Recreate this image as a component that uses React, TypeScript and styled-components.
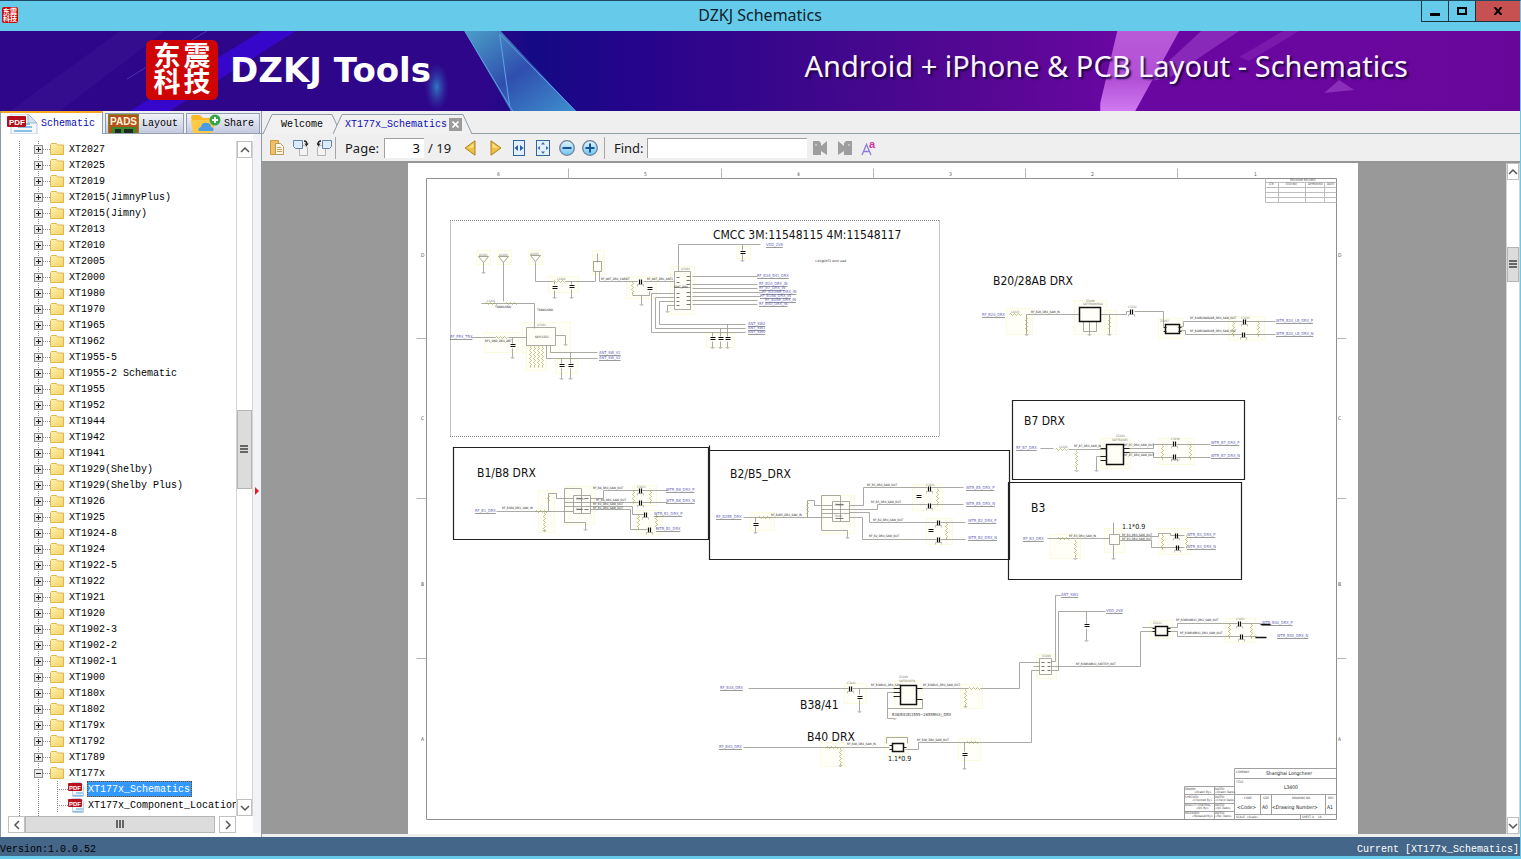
import React from "react";
import styled, { createGlobalStyle, css } from "styled-components";

const mono = `"Liberation Mono", "Noto Sans CJK SC", monospace`;
const ui = `"Noto Sans", "Open Sans", "Noto Sans CJK SC", sans-serif`;

const GlobalStyle = createGlobalStyle`
  *, *::before, *::after { box-sizing: border-box; }
  body { margin: 0; overflow: hidden; }
  button { font: inherit; color: inherit; padding: 0; margin: 0; border: 0; background: none; }
  svg { display: block; flex: none; }
`;

const Window = styled.div`
  display: flex;
  flex-direction: column;
  height: 100vh;
  background: #efeff0;
  border-top: 1px solid #1c4a63;
  border-right: 1px solid #66cbea;
  border-bottom: 3px solid #66cbea;
  font-family: ${mono};
  font-size: 10px;
  color: #000;
`;

/* ---------- title bar ---------- */

const TitleBar = styled.header`
  display: grid;
  grid-template-columns: 1fr auto 1fr;
  height: 30px;
  flex: none;
  background: #66cbea;
`;

const AppTitle = styled.h1`
  margin: 0;
  font: 400 16px/28px ${ui};
  color: #10222c;
`;

const Seal = styled.span<{ $small?: boolean }>`
  display: grid;
  grid-template-columns: auto auto;
  place-content: center;
  flex: none;
  color: #fff;
  background: #cf0505;
  font-family: "Liberation Sans", "Noto Sans CJK SC", sans-serif;
  font-weight: 700;
  ${(p) =>
    p.$small
      ? css`
          width: 16px;
          height: 16px;
          margin: 6px 0 0 2px;
          border-radius: 2px;
          font-size: 7px;
          line-height: 7px;
        `
      : css`
          width: 72px;
          height: 60px;
          border-radius: 6px;
          font-size: 27px;
          line-height: 26px;
          column-gap: 3px;
        `}
`;

const WindowButtons = styled.div`
  display: flex;
  justify-self: end;
  height: 21px;
  border-bottom: 1px solid #17313d;
`;

const WindowButton = styled.button<{ $close?: boolean }>`
  display: grid;
  place-items: center;
  width: ${(p) => (p.$close ? 45 : 27)}px;
  border-left: 1px solid #17313d;
  background: ${(p) => (p.$close ? "#c75050" : "transparent")};
`;

/* ---------- banner ---------- */

const Banner = styled.div`
  position: relative;
  display: flex;
  align-items: center;
  height: 80px;
  flex: none;
  padding: 0 112px 2px 146px;
  overflow: hidden;
  background: #2f0689;
`;

const BannerArt = styled.svg`
  position: absolute;
  inset: 0;
  width: 100%;
  height: 100%;
`;

const Brand = styled.div`
  display: flex;
  align-items: center;
  gap: 12px;
  position: relative;
`;

const BrandName = styled.span`
  font: 700 34px/40px "DejaVu Sans", ${ui};
  color: #fff;
  white-space: nowrap;
`;

const Slogan = styled.p`
  position: relative;
  margin: 0 0 8px auto;
  font: 400 29px/40px ${ui};
  color: #fbf4ff;
  white-space: nowrap;
  text-shadow: 2px 2px 2px #1c0540;
`;

/* ---------- main split ---------- */

const Main = styled.div`
  display: flex;
  flex: 1;
  min-height: 0;
`;

const SidePanel = styled.aside`
  display: flex;
  flex-direction: column;
  flex: none;
  width: 261px;
  background: #fff;
  border-left: 1px solid #8a9bb0;
`;

const SideTabs = styled.nav`
  display: flex;
  align-items: flex-end;
  gap: 2px;
  height: 23px;
  flex: none;
  background: #efeff0;
  border-bottom: 1px solid #93a1b3;
`;

const SideTab = styled.button<{ $active?: boolean }>`
  display: flex;
  align-items: center;
  gap: 3px;
  height: 20px;
  overflow: hidden;
  padding: 0 5px 0 2px;
  border: 1px solid #8f9db5;
  border-bottom: 0;
  background: linear-gradient(#f2f3f8, #c3cadf);
  ${(p) =>
    p.$active &&
    css`
      height: 23px;
      margin-bottom: -1px;
      padding: 0 7px 0 5px;
      color: #0a0ab4;
      background: #fff;
      border-width: 2px 1px 0 0;
      border-top-color: #f5a623;
    `}
`;

const SideBody = styled.div`
  display: flex;
  flex: 1;
  min-height: 0;
  padding: 7px 0 4px 7px;
`;

const TreeFrame = styled.div`
  display: grid;
  grid-template: minmax(0, 1fr) 17px / minmax(0, 1fr) 17px;
  flex: 1;
  min-width: 0;
`;

const Splitter = styled.div`
  display: flex;
  align-items: center;
  width: 8px;
  margin-top: -7px;
  padding: 14px 0 0 1px;
  background: #f3f3f7;
`;

const Tree = styled.ul`
  margin: 0;
  padding: 0;
  list-style: none;
  overflow: hidden;
  background-image: linear-gradient(#888 50%, transparent 50%), linear-gradient(#888 50%, transparent 50%);
  background-size: 1px 2px, 1px 2px;
  background-position: 11px 0, 30px 0;
  background-repeat: repeat-y;
`;

const TreeRow = styled.li<{ $child?: boolean }>`
  display: flex;
  align-items: center;
  height: 16px;
  padding-left: ${(p) => (p.$child ? 49 : 26)}px;
  white-space: nowrap;
`;

const Expander = styled.button`
  display: block;
`;

const Branch = styled.span<{ $long?: boolean }>`
  width: ${(p) => (p.$long ? 11 : 7)}px;
  height: ${(p) => (p.$long ? 16 : 1)}px;
  flex: none;
  background: ${(p) =>
    p.$long
      ? "repeating-linear-gradient(#888 0 1px, transparent 1px 2px) 0 0 / 1px 100% no-repeat, repeating-linear-gradient(90deg, #888 0 1px, transparent 1px 2px) 0 8px / 100% 1px no-repeat"
      : "repeating-linear-gradient(90deg, #888 0 1px, transparent 1px 2px)"};
`;

const TreeLabel = styled.button<{ $selected?: boolean; $child?: boolean }>`
  height: 16px;
  margin-left: ${(p) => (p.$child ? 3 : 4)}px;
  padding: 1px 1px 0;
  line-height: 15px;
  ${(p) =>
    p.$selected &&
    css`
      padding-right: 2px;
      color: #fff;
      background: #3399ff;
      outline: 1px dotted #7a4a10;
      outline-offset: -1px;
    `}
`;

/* ---------- scroll bars ---------- */

const Track = styled.div<{ $row?: boolean }>`
  display: flex;
  flex-direction: ${(p) => (p.$row ? "row" : "column")};
  min-width: 0;
  min-height: 0;
  background: #fff;
  border: solid #d4d4d4;
  border-width: ${(p) => (p.$row ? "0" : "0 1px")};
`;

const ScrollButton = styled.button<{ $w?: number }>`
  display: grid;
  place-items: center;
  flex: none;
  width: ${(p) => (p.$w ? p.$w + "px" : "auto")};
  height: 17px;
  border: 1px solid #c0c0c0;
  background: #fff;
`;

const Thumb = styled.div<{ $grow: number; $row?: boolean }>`
  display: grid;
  place-items: center;
  flex: ${(p) => p.$grow} 1 0;
  background: #dcdcdc;
  border: 1px solid #b5b5b5;
`;

const Gap = styled.div<{ $grow: number }>`
  flex: ${(p) => p.$grow} 1 0;
`;

/* ---------- document side ---------- */

const DocPanel = styled.main`
  display: flex;
  flex-direction: column;
  flex: 1;
  min-width: 0;
  border-left: 1px solid #8f9ba6;
`;

const DocTabs = styled.nav`
  display: flex;
  align-items: flex-end;
  height: 23px;
  flex: none;
  padding-left: 1px;
  box-shadow: inset 0 -1px #93a1a8;
`;

const DocTabBox = styled.div<{ $active?: boolean }>`
  display: flex;
  height: 20px;
  margin-left: ${(p) => (p.$active ? -8 : 0)}px;
  color: ${(p) => (p.$active ? "#0a0ab4" : "#000")};
`;

const DocTabFace = styled.div<{ $active?: boolean }>`
  display: flex;
  align-items: center;
  gap: 2px;
  padding: ${(p) => (p.$active ? "0 0 0 2px" : "0 8px")};
  border-top: 1px solid #8d9aa8;
  background: #f1f1f2;
`;

const CloseTab = styled.button`
  display: grid;
  place-items: center;
  width: 13px;
  height: 13px;
  background: #9b9b9b;
`;

const Toolbar = styled.div`
  display: flex;
  align-items: center;
  height: 29px;
  flex: none;
  padding-left: 5px;
  border-bottom: 2px solid #969696;
  font: 400 13px/20px ${ui};
  color: #1a1a1a;
`;

const ToolButton = styled.button<{ $w?: number }>`
  display: grid;
  place-items: center;
  width: ${(p) => p.$w ?? 24}px;
  height: 24px;
`;

const Divider = styled.span`
  width: 1px;
  height: 22px;
  background: #a5a5a5;
`;

const Field = styled.label<{ $gap: number }>`
  display: flex;
  align-items: center;
  gap: ${(p) => p.$gap}px;
  padding-left: 9px;
`;

const Box = styled.input<{ $w: number }>`
  width: ${(p) => p.$w}px;
  height: 20px;
  padding: 0 4px;
  border: 0;
  border-top: 1px solid #a0a0a0;
  border-left: 1px solid #a0a0a0;
  background: #fff;
  font: inherit;
  outline: 0;
  text-align: right;
`;

const Total = styled.span`
  width: 34px;
  padding-left: 4px;
  white-space: nowrap;
`;

const Viewer = styled.div`
  display: flex;
  flex: 1;
  min-height: 0;
  margin-bottom: 3px;
  background: #999;
`;

const Stage = styled.div`
  display: flex;
  justify-content: center;
  flex: 1;
  min-width: 0;
  padding-right: 2px;
  overflow: hidden;
`;

const Sheet = styled.svg`
  width: 950px;
  background: #fff;
  font-family: "DejaVu Sans Condensed", "DejaVu Sans", sans-serif;
`;

const StatusBar = styled.footer`
  display: flex;
  justify-content: space-between;
  align-items: flex-end;
  height: 19px;
  flex: none;
  padding: 0 1px 0 0;
  background: #446688;
  line-height: 13px;
`;

const Current = styled.span`
  color: #fff;
`;

/* ---------- icons ---------- */

const Chevron = ({ dir }: { dir: "up" | "down" | "left" | "right" }) => {
  const d = { up: "M1 7l4-4 4 4", down: "M1 3l4 4 4-4", left: "M7 1L3 5l4 4", right: "M3 1l4 4-4 4" }[dir];
  return (
    <svg width="10" height="10" viewBox="0 0 10 10">
      <path d={d} fill="none" stroke="#555" strokeWidth="1.5" />
    </svg>
  );
};

const Grip = ({ row }: { row?: boolean }) => (
  <svg width="9" height="9" viewBox="0 0 9 9">
    <path d={row ? "M1 0v8M4 0v8M7 0v8" : "M0 1h8M0 4h8M0 7h8"} stroke="#666" strokeWidth="2" />
  </svg>
);

const FolderIcon = () => (
  <svg width="14" height="14" viewBox="0 0 14 14">
    <defs>
      <linearGradient id="folder" x1="0" y1="0" x2="1" y2="1">
        <stop offset="0" stopColor="#fff3b4" />
        <stop offset="1" stopColor="#f5d163" />
      </linearGradient>
    </defs>
    <path d="M.5 12.500V2.500l1-1h5l1 1.500h6v9.500z" fill="url(#folder)" stroke="#dfb54c" />
  </svg>
);

const BoxIcon = ({ open }: { open?: boolean }) => (
  <svg width="9" height="9" viewBox="0 0 9 9">
    <rect x=".5" y=".5" width="8" height="8" fill="#e9e9e9" stroke="#8e8e8e" />
    <path d={open ? "M2 4.500h5" : "M2 4.500h5M4.500 2v5"} stroke="#222" />
  </svg>
);

const PdfIcon = ({ large }: { large?: boolean }) => (
  <svg width={large ? 32 : 16} height={large ? 20 : 15} viewBox={large ? "0 0 32 20" : "0 0 16 15"}>
    {large ? (
      <>
        <path d="M5 0h17l9 9v11H5z" fill="#f4f8fc" stroke="#b9cfe2" />
        <path d="M22 0v9h9z" fill="#d5e4f2" stroke="#9fb9cf" />
        <path d="M12 13h14M16 10h8M8 17h18" stroke="#8ac0e6" strokeWidth="2" />
        <rect x="1" y="2" width="19" height="11" rx="1" fill="#b40f1b" />
        <text x="3" y="11" fontSize="8" fontWeight="700" fontFamily="Liberation Sans, sans-serif" fill="#fff">PDF</text>
      </>
    ) : (
      <>
        <path d="M4.500 0.500h8l3 3v11h-11z" fill="#f6fafe" stroke="#c3d5e4" />
        <path d="M8 11h7M5 13.500h10" stroke="#8ac0e6" strokeWidth="1.500" />
        <rect x="0" y="1" width="14" height="8" rx="1" fill="#bb101d" />
        <text x="1" y="7.500" fontSize="6" fontWeight="700" fontFamily="Liberation Sans, sans-serif" fill="#fff">PDF</text>
      </>
    )}
  </svg>
);

const PadsIcon = () => (
  <svg width="31" height="19" viewBox="0 0 31 19">
    <rect width="31" height="19" fill="#b4521b" />
    <rect x=".5" y=".5" width="30" height="20" fill="none" stroke="#7d8a2c" />
    <text x="2" y="11" fontSize="10" fontWeight="700" fontFamily="Liberation Sans, sans-serif" fill="#fff6dc">PADS</text>
    <rect x="4" y="13" width="24" height="6" fill="#3c8a2e" />
    <path d="M7 15h6v4H7zM16 15h9v4h-9z" fill="#1f2b1c" />
  </svg>
);

const ShareIcon = () => (
  <svg width="32" height="19" viewBox="-1 0 32 19">
    <path d="M1 3q0-2 2-2h7l3 3h8q3 0 4 3l-3 12H5z" fill="#fbb827" />
    <path d="M3 19L1 6h22l-1 13z" fill="#ffca45" />
    <path d="M9 17q-2-3 2-4 1-5 6-4 4 0 4 4 4 1 2 4z" fill="#4a9be8" />
    <circle cx="25" cy="6" r="5.500" fill="#35a845" />
    <path d="M25 3v6M22 6h6" stroke="#fff" strokeWidth="2" />
  </svg>
);

const DocIcon = () => (
  <svg width="16" height="16" viewBox="0 0 16 16">
    <path d="M1.500 .5h8v14h-8z" fill="#f0c069" stroke="#cf9a3e" />
    <path d="M6.500 3.500h5l3 3v8h-8z" fill="#fdf6e3" stroke="#b79a63" />
    <path d="M8 7.500h4M8 9.500h5M8 11.500h5" stroke="#c9a35f" />
  </svg>
);

const RotateIcon = ({ flip }: { flip?: boolean }) => (
  <svg width="17" height="17" viewBox="0 0 17 17">
    <g transform={flip ? "matrix(-1 0 0 1 17 0)" : undefined}>
      <path d="M7.500 6.500h5l3 2v8h-8z" fill="#f3f3f3" stroke="#b5b5b5" />
      <path d="M1.500 1.500h9v8h-7l-2-2z" fill="#dcebfa" stroke="#5f83ab" />
      <path d="M12 2q3 0 3 3.500" fill="none" stroke="#222" strokeWidth="1.300" />
      <path d="M12.500 4.500h4L14.500 7.500z" fill="#222" />
    </g>
  </svg>
);

const PageArrow = ({ next }: { next?: boolean }) => (
  <svg width="12" height="16" viewBox="0 0 12 16">
    <path d={next ? "M1 .8v14.400L11 8z" : "M11 .8v14.400L1 8z"} fill="#f0c040" stroke="#ab8223" strokeLinejoin="round" />
    <path d={next ? "M2.500 3.500v4L8 8z" : "M9.500 3.500v4L4 8z"} fill="#ffe48c" />
  </svg>
);

const FitIcon = ({ page }: { page?: boolean }) => (
  <svg width="14" height="16" viewBox="0 0 14 16">
    <rect x={page ? 0.5 : 1.5} y=".5" width={page ? 13 : 11} height="15" fill="#e3effc" stroke="#31649f" />
    {page ? (
      <path d="M7 2L9 4.500H5zM7 14l2-2.500H5zM1.500 8L4 6v4zM12.500 8L10 6v4z" fill="#3d6fb0" />
    ) : (
      <path d="M2.500 8L6 5v6zM11.500 8L8 5v6z" fill="#2b5ea8" />
    )}
  </svg>
);

const ZoomIcon = ({ plus }: { plus?: boolean }) => (
  <svg width="16" height="16" viewBox="0 0 16 16">
    <defs>
      <linearGradient id="lens" x1="0" y1="0" x2="0" y2="1">
        <stop offset="0" stopColor="#e3f5ff" />
        <stop offset="1" stopColor="#6cc3f5" />
      </linearGradient>
    </defs>
    <circle cx="8" cy="8" r="7.300" fill="url(#lens)" stroke="#6b8299" strokeWidth="1.300" />
    <path d={plus ? "M3.500 8h9M8 3.500v9" : "M3.500 8h9"} stroke="#1b5594" strokeWidth="2" />
  </svg>
);

const FindArrow = ({ next }: { next?: boolean }) => (
  <svg width="16" height="16" viewBox="0 0 16 16">
    <g transform={next ? "matrix(-1 0 0 1 16 0)" : undefined}>
      <path d="M1 1h6l2 2v3l6-5v14l-6-4v4H1z" fill="#9e9e9e" />
      <circle cx="4" cy="5" r="1" fill="#d0d0d0" />
    </g>
  </svg>
);

const CaseIcon = () => (
  <svg width="16" height="20" viewBox="0 -1 16 20">
    <path d="M1 16L5.500 5.500 10 16M3 12.500h5" fill="none" stroke="#8f7be0" strokeWidth="1.300" />
    <text x="8" y="9" fontSize="11" fontWeight="700" fontFamily="Liberation Sans, sans-serif" fill="#c93aa0">a</text>
  </svg>
);

const Slant = ({ side }: { side: "left" | "right" }) => (
  <svg width="10" height="20" viewBox="0 0 10 20">
    <path
      d={side === "left" ? "M0 20L9 .5H10V20z" : "M10 20L1 .5H0V20z"}
      fill="#f1f1f2"
    />
    <path d={side === "left" ? "M0 20L9 .5H10" : "M10 20L1 .5H0"} fill="none" stroke="#8d9aa8" />
  </svg>
);

/* ---------- schematic drawing ---------- */

const wires = `
M503 262V301 M483 262V272 M481 303H534V328 M535 262V281H553 M565 281H595V271 M599 271V281H637 M643 281H674 M597 253V262
M632 295H649V291 M641 295V304 M554 281V284 M554 290V297 M571 281V284 M571 289V297
M674 271H690V309H674Z M674 287H690 M678 271V244H760 M742 244V250 M742 254V260
M692 276H757 M692 284H757 M692 288H757 M692 292H762 M692 296H760 M692 300H757 M692 304H757
M674 293H651V332H745 M674 297H655V328H745 M674 301H659V324H745 M674 305H667V311
M712 332V336 M720 328V336 M727 324V336 M712 341V347 M720 341V347 M727 341V347
M526 327H555V345H526Z M555 335H565V344 M471 337H495 M508 337H526 M512 337V343 M512 348V357
M546 345V358H597 M550 345V352H597 M561 358V363 M561 368V378 M570 352V363 M570 368V378
M1026 314H1079 M1083 321V331H1096V321 M1089 321V334 M1100 314H1126V311H1129 M1109 314V334 M1134 311H1163V326
M1180 326H1183V321H1242 M1246 321H1275 M1180 330H1185V334H1241 M1245 334H1275 M1026 314V334
M1040 448H1053 M1068 449H1106 M1106 456H1096V470 M1123 448H1153V444H1172 M1176 444H1210 M1123 452H1153V457H1172 M1176 457H1210
M1047 538H1109 M1109 534V544H1119V534Z M1113 522V534 M1113 544V558 M1119 536H1158V533H1170V535H1184 M1119 540H1151V547H1184
M496 511H573 M548 511V493H556V498H573 M581 495V488H564V522H585V529 M573 495H590V513H573Z M573 502H590 M573 506H590 M581 495V513
M564 502H573 M564 506H573 M590 498H603V490H638 M642 490H667 M590 502H638 M642 502H667 M590 506H632V514H643 M590 509H630V529H647
M743 517H832 M755 517V522 M755 526V532 M807 517V500H814V505H832 M840 501V495H821V530H847V537 M832 501H849V521H832Z M832 509H849 M832 513H849 M840 501V521
M821 509H832 M821 513H832 M849 505H863V487H927 M931 487H963 M849 509H877V504H927 M931 504H963 M849 512H869V522H936 M940 522H965 M849 517H862V539H936 M940 539H965
M748 688H848 M852 688H893 M859 688V694 M859 699V711 M893 692H887V718H894 M922 699V708H887 M922 688H968 M980 688H1019V662H1039
M743 747H889 M886 743V737H907V743 M905 749H918V742H1031V670H1039 M964 742V751 M964 756V768
M1039 658H1051V674H1039Z M1051 661H1055V595H1060 M1051 670H1058V611H1105 M1051 666H1140V631H1155 M1142 627H1155 M1086 611V623 M1086 628V640 M1033 666H1039
M1167 627H1177V623H1237 M1241 623H1260 M1167 631H1177V636H1239 M1243 636H1256
`;

const icBodies = "M1079 307H1100V321H1079Z M1165 324H1179V333H1165Z M1106 444H1123V464H1106Z M900 685H916V704H900Z M892 743H903V751H892Z M1155 626H1167V635H1155Z";
const icStubs = "M1163 327H1166 M1163 331H1166 M1178 327H1181 M1178 331H1181 M1100 448H1106 M1100 456H1106 M1100 460H1106 M1123 448H1129 M1123 452H1129 M893 688H900 M893 692H900 M893 696H900 M916 688H922 M916 699H922 M889 745H892 M889 749H892 M903 747H906 M1152 628H1155 M1152 631H1155 M1167 628H1170 M1167 631H1170";

/* components in series with a wire: x, y */
const seriesCaps = [
  [640, 281], [1131, 311], [1244, 321], [1243, 334], [1174, 443], [1174, 456], [1176, 535], [1177, 547],
  [640, 490], [640, 502], [645, 514], [649, 529], [929, 488], [929, 505], [938, 522], [938, 539], [850, 688], [1239, 623], [1241, 636],
];

/* components shunted to ground: x, y */
const shuntCaps = [
  [554, 287], [571, 286], [649, 288], [742, 252], [712, 338], [720, 338], [727, 338], [512, 345], [561, 365], [570, 365],
  [755, 524], [918, 496], [930, 530], [859, 697], [964, 754], [1086, 625],
];

const seriesRes = [[553, 281], [485, 303], [505, 303], [495, 337], [1009, 314], [1055, 449], [1057, 538], [535, 511], [758, 517], [968, 688], [826, 747], [966, 742]];

const shuntRes = [
  [632, 281, 12], [530, 346, 20], [534, 346, 20], [538, 346, 20], [542, 346, 20], [1026, 316, 16], [1109, 316, 14],
  [1233, 321, 14], [1258, 321, 14], [1076, 450, 18], [1162, 444, 14], [1190, 444, 14], [1075, 540, 16], [1162, 534, 14], [1186, 535, 12],
  [544, 512, 18], [633, 490, 12], [650, 490, 12], [638, 514, 14], [656, 514, 14], [807, 501, 14], [937, 488, 16], [946, 522, 16],
  [965, 689, 16], [840, 748, 16], [1229, 623, 14], [1251, 623, 14], [548, 494, 8],
];

const grounds = [
  [483, 272], [554, 297], [571, 297], [641, 304], [742, 260], [667, 311], [712, 347], [720, 347], [727, 347], [565, 344], [512, 357],
  [561, 378], [570, 378], [1026, 334], [1089, 334], [1109, 334], [1076, 470], [1096, 470], [1075, 558], [1113, 558], [544, 530], [585, 529],
  [755, 532], [847, 537], [859, 711], [894, 718], [965, 706], [840, 765], [964, 768], [1086, 640],
];

const halos = [
  [476, 250, 14, 14], [497, 250, 14, 14], [528, 250, 14, 14], [592, 250, 12, 24], [548, 276, 30, 16], [626, 276, 30, 22], [670, 266, 24, 48],
  [522, 322, 48, 30], [706, 333, 28, 14], [736, 246, 14, 12], [555, 359, 22, 14], [526, 346, 20, 24], [484, 332, 34, 20], [1074, 300, 32, 34],
  [1158, 318, 24, 20], [1228, 316, 36, 24], [1006, 308, 26, 26], [1104, 310, 12, 24], [1100, 438, 30, 30], [1158, 438, 36, 26], [1158, 528, 32, 26],
  [1050, 534, 30, 24], [1104, 528, 20, 24], [564, 486, 30, 38], [632, 485, 24, 20], [636, 510, 26, 24], [822, 495, 32, 38], [912, 484, 30, 26],
  [926, 518, 26, 26], [538, 490, 16, 42], [844, 683, 22, 20], [894, 680, 28, 28], [960, 684, 22, 24], [884, 736, 24, 20], [1036, 654, 20, 24],
  [1150, 620, 22, 18], [1225, 618, 30, 24], [820, 742, 24, 24], [958, 738, 22, 22], [750, 512, 24, 18],
];

type Note = [number, number, string];

const netNames: Note[] = [
  [601, 280, "RF_ANT_DRX_CARKIT"], [647, 280, "RF_ANT_DRX_ANT1"], [1031, 313, "RF_B20_DRX_SAW_IN"], [1190, 319, "RF_B20B28AB28B_DRX_SAW_OUT"],
  [1190, 332, "RF_B20B28AB28B_DRX_SAW_OUT"], [1074, 447, "RF_B7_DRX_SAW_IN"], [1124, 446, "RF_B7_DRX_SAW_OUT"], [1124, 456, "RF_B7_DRX_SAW_OUT"],
  [1069, 537, "RF_B3_DRX_SAW_IN"], [1122, 536, "RF_B3_DRX_SAW_OUT"], [1122, 540, "RF_B3_DRX_SAW_OUT"], [502, 509, "RF_B1B8_DRX_SAW_IN"],
  [593, 489, "RF_B8_DRX_SAW_OUT"], [596, 501, "RF_B8_DRX_SAW_OUT"], [593, 505, "RF_B1_DRX_SAW_OUT"], [593, 509, "RF_B1_DRX_SAW_OUT"],
  [771, 516, "RF_B2B5_DRX_SAW_IN"], [867, 486, "RF_B5_DRX_SAW_OUT"], [871, 503, "RF_B5_DRX_SAW_OUT"], [873, 521, "RF_B2_DRX_SAW_OUT"],
  [869, 537, "RF_B2_DRX_SAW_OUT"], [871, 686, "RF_B38B41_DRX_SAW"], [923, 686, "RF_B38B41_DRX_SAW_OUT"], [847, 745, "RF_B40_DRX_SAW_IN"],
  [917, 741, "RF_B40_DRX_SAW_OUT"], [1076, 665, "RF_B38B40B41_SWITCH_OUT"], [1176, 621, "RF_B38B40B41_DRX_SAW_OUT"], [1180, 634, "RF_B38B40B41_DRX_SAW_OUT"],
  [495, 308, "TRANS/GND"], [537, 311, "TRANS/GND"], [485, 342, "RF1_GND_DRX_ANT"], [535, 338, "SKY13351"], [815, 262, "1.8V@LMT3 short used"], [674, 288, "SP8T_DRX"],
];

const refNames: Note[] = [
  [479, 256, "A3201"], [499, 256, "A3202"], [530, 255, "A3203"], [681, 270, "U3202"], [537, 326, "U3201"], [1086, 302, "Z3206"], [1083, 305, "SAFFB806MAA"],
  [1160, 322, "Z3207"], [1116, 437, "Z3204"], [1112, 441, "SAFFB2G65"], [899, 678, "Z3209"], [899, 682, "SAFEA2G59"], [1042, 657, "U3204"], [1153, 624, "Z3211"],
  [557, 280, "L3204"], [487, 302, "L3201"], [1011, 313, "L3215"], [1059, 448, "L3220"], [1128, 308, "C3231"], [1241, 319, "C3233"], [1171, 440, "C3236"],
  [1171, 461, "C3237"], [576, 500, "Z3201"], [576, 510, "DUAL"], [835, 506, "Z3202"], [835, 517, "DUAL"], [637, 488, "C3211"], [926, 486, "C3221"], [847, 684, "C3241"], [1236, 620, "C3251"],
];

const ports: Note[] = [
  [766, 246, "VDD_2V8"], [757, 277, "RF_B38_B41_DRX"], [759, 285, "RF_B20_DRX_IN"], [759, 289, "RF_B7_DRX_IN"], [762, 293, "RF_B3GSM_DRX_IN"],
  [760, 297, "RF_B1B8_DRX_IN"], [765, 301, "RF_B2B5_DRX_IN"], [759, 305, "RF_B40_DRX_IN"], [748, 325, "ANT_SW2"], [748, 329, "ANT_SW1"], [748, 333, "ANT_SW0"],
  [450, 338, "RF_PRX_TRX"], [599, 354, "ANT_SW_V1"], [599, 359, "ANT_SW_V2"], [982, 316, "RF_B20_DRX"], [1276, 322, "WTR_B20_LB_DRX_P"], [1276, 335, "WTR_B20_LB_DRX_N"],
  [1016, 449, "RF_B7_DRX"], [1211, 444, "WTR_B7_DRX_P"], [1211, 457, "WTR_B7_DRX_N"], [1023, 540, "RF_B3_DRX"], [1187, 536, "WTR_B3_DRX_P"],
  [1187, 548, "WTR_B3_DRX_N"], [475, 512, "RF_B1_DRX"], [666, 491, "WTR_B8_DRX_P"], [666, 502, "WTR_B8_DRX_N"], [654, 515, "WTR_B1_DRX_P"],
  [656, 530, "WTR_B1_DRX"], [716, 518, "RF_B2B5_DRX"], [966, 489, "WTR_B5_DRX_P"], [966, 505, "WTR_B5_DRX_N"], [968, 522, "WTR_B2_DRX_P"],
  [968, 539, "WTR_B2_DRX_N"], [720, 689, "RF_B38_DRX"], [719, 748, "RF_B40_DRX"], [1061, 596, "ANT_SW3"], [1106, 612, "VDD_2V8"], [1262, 624, "WTR_B40_DRX_P"], [1277, 637, "WTR_B40_DRX_N"],
];

const captions: Note[] = [
  [713, 239, "CMCC 3M:11548115 4M:11548117"], [993, 285, "B20/28AB DRX"], [1024, 425, "B7 DRX"], [1031, 512, "B3"], [477, 477, "B1/B8 DRX"],
  [730, 478, "B2/B5_DRX"], [800, 709, "B38/41"], [807, 741, "B40 DRX"],
];

const Notes = ({ items, size, fill }: { items: Note[]; size: number; fill: string }) => (
  <g fontSize={size} fill={fill}>
    {items.map(([x, y, t], i) => (
      <text key={i} x={x} y={y}>{t}</text>
    ))}
  </g>
);

const zigzag = (x: number, y: number) => `M${x} ${y}l1-1 2 2 2-2 2 2 2-2 2 2 1-1`;
const zigzagDown = (x: number, y: number, h: number) => {
  let d = `M${x} ${y}v1`;
  for (let i = 1; i < h - 2; i += 2) d += i % 4 === 1 ? "l1 1-1 1" : "l-1 1 1 1";
  return d + "v2";
};

const Schematic = () => (
  <Sheet viewBox="408 163 950 671" preserveAspectRatio="xMidYMin meet" role="img" aria-label="Schematic page 3">
    <g fill="none" stroke="#fbfbe0" strokeWidth="1">
      {halos.map(([x, y, w, h], i) => (
        <rect key={i} x={x + 0.5} y={y + 0.5} width={w} height={h} fill="#fffff8" />
      ))}
    </g>
    <g transform="translate(.5 .5)" fill="none">
      <path d="M426 178H1336V819H426Z" stroke="#8f8f8f" />
      <path d="M568 168V178M721 168V178M873 168V178M1025 168V178M1177 168V178M416 338H426M416 498H426M416 658H426M1336 338H1346M1336 498H1346M1336 658H1346" stroke="#b5b5b5" />
      <path d="M449.500 220H939M449.500 436H939M450 220V436M939 220V436" stroke="#888" strokeDasharray="1 1" />
      <path d={wires} stroke="#96968e" strokeWidth=".8" />
      <path d="M478 256H488L483 262ZM498 256H508L503 262ZM530 255H540L535 261ZM593 261H601V271H593Z" stroke="#8f8f7c" strokeWidth=".8" />
      <path d={seriesRes.map(([x, y]) => zigzag(x, y)).join("")} stroke="#a3a35a" strokeWidth=".7" />
      <path d={shuntRes.map(([x, y, h]) => zigzagDown(x, y, h)).join("")} stroke="#a5a54a" strokeWidth=".8" />
      <path d={grounds.map(([x, y]) => `M${x - 2} ${y}h4M${x - 1} ${y + 1}h2`).join("")} stroke="#b0b0b0" strokeWidth=".7" />
      <path d={seriesCaps.map(([x, y]) => `M${x - 1} ${y - 2}v5M${x + 1} ${y - 2}v5`).join("")} stroke="#111" strokeWidth="1.200" />
      <path d={seriesCaps.map(([x, y]) => `M${x - 3} ${y + 5}v-2h6v2`).join("")} stroke="#999" strokeWidth=".6" />
      <path d={shuntCaps.map(([x, y]) => `M${x - 2} ${y - 1}h5M${x - 2} ${y + 1}h5`).join("")} stroke="#111" strokeWidth="1.200" />
      <path d={icBodies} stroke="#111" strokeWidth="1.500" />
      <path d={icStubs} stroke="#222" />
      <path d="M576 498h6M584 498h4M576 509h6M584 509h4M835 504h8M835 518h8M676 277h3M676 282h3M676 293h3M676 297h3M676 301h3M676 305h3M686 276h4M686 280h4M686 284h4M686 292h4M686 296h4M686 300h4M686 304h4M1041 662h3M1047 662h3M1041 666h3M1047 666h3M1041 670h3M1047 670h3" stroke="#777" />
      <path d="M453 447H708V539H453ZM709 445V559H1009V450H709M1012 400H1244V479H1012ZM1008 482H1241V579H1008Z" stroke="#222" strokeWidth="1.200" />
      <path d="M1260 624h10M1255 637h11" stroke="#111" strokeWidth="1.500" />
      <path d="M1265 178V202H1336M1265 182H1336M1265 187H1336M1265 192H1336M1265 197H1336M1278 182V202M1305 182V202M1324 182V202" stroke="#bdbdbd" />
      <path d="M1234 819V768H1336M1234 778H1336M1234 794H1336M1234 814H1336M1260 794V814M1271 794V814M1325 794V814M1300 814V819M1234 786H1184V819M1184 794H1234M1184 803H1234M1184 811H1234M1214 786V819" stroke="#a0a0a0" />
    </g>
    <Notes items={netNames} size={3} fill="#222" />
    <Notes items={refNames} size={3} fill="#77776a" />
    <g textDecoration="underline">
      <Notes items={ports} size={4} fill="#6464b8" />
    </g>
    <Notes items={captions} size={12} fill="#111" />
    <Notes items={[[1122, 529, "1.1*0.9"], [888, 761, "1.1*0.9"]]} size={7} fill="#111" />
    <Notes items={[[892, 716, "B38/B41B(2555~2655MHz)_DRX"]]} size={4} fill="#333" />
    <Notes
      items={[[497, 176, "6"], [644, 176, "5"], [797, 176, "4"], [949, 176, "3"], [1091, 176, "2"], [1254, 176, "1"], [421, 257, "D"], [421, 420, "C"], [421, 586, "B"], [421, 741, "A"], [1338, 257, "D"], [1338, 420, "C"], [1338, 586, "B"], [1338, 741, "A"]]}
      size={5}
      fill="#555"
    />
    <Notes
      items={[[1266, 775, "Shanghai Longcheer"], [1284, 789, "L3400"], [1237, 809, "<Code>"], [1262, 809, "A0"], [1272, 809, "<Drawing Number>"], [1327, 809, "A1"]]}
      size={5}
      fill="#222"
    />
    <Notes
      items={[
        [1236, 773, "COMPANY:"], [1236, 783, "TITLE:"], [1244, 799, "CODE:"], [1263, 799, "SIZE:"], [1292, 799, "DRAWING NO:"], [1328, 799, "REV:"], [1236, 818, "SCALE: <Scale>"], [1302, 818, "SHEET: 8"], [1318, 818, "19"],
        [1185, 790, "DRAWN:"], [1194, 793, "<Drawn By>"], [1215, 790, "DATED:"], [1215, 793, "<Drawn Date>"], [1185, 798, "CHECKED:"], [1192, 801, "<Checked By>"], [1215, 798, "DATED:"], [1215, 801, "<Check Date>"],
        [1185, 806, "QUALITY CONTROL:"], [1196, 809, "<QC By>"], [1215, 806, "DATED:"], [1215, 809, "<QC Date>"], [1185, 814, "RELEASED:"], [1192, 817, "<Released By>"], [1215, 814, "DATED:"], [1215, 817, "<Rel. Date>"],
        [1290, 181, "REVISION RECORD"], [1269, 185, "LTR"], [1286, 185, "ECO NO:"], [1308, 185, "APPROVED:"], [1327, 185, "DATE:"],
      ]}
      size={3}
      fill="#444"
    />
  </Sheet>
);

/* ---------- data ---------- */

const models = [
  "XT2027", "XT2025", "XT2019", "XT2015(JimnyPlus)", "XT2015(Jimny)", "XT2013", "XT2010", "XT2005", "XT2000", "XT1980", "XT1970", "XT1965",
  "XT1962", "XT1955-5", "XT1955-2 Schematic", "XT1955", "XT1952", "XT1944", "XT1942", "XT1941", "XT1929(Shelby)", "XT1929(Shelby Plus)",
  "XT1926", "XT1925", "XT1924-8", "XT1924", "XT1922-5", "XT1922", "XT1921", "XT1920", "XT1902-3", "XT1902-2", "XT1902-1", "XT1900", "XT180x",
  "XT1802", "XT179x", "XT1792", "XT1789", "XT177x",
];
const files = ["XT177x_Schematics", "XT177x_Component_Location"];

export default function App() {
  return (
    <>
      <GlobalStyle />
      <Window>
        <TitleBar>
          <Seal $small>
            <span>东</span><span>震</span><span>科</span><span>技</span>
          </Seal>
          <AppTitle>DZKJ Schematics</AppTitle>
          <WindowButtons>
            <WindowButton aria-label="Minimize">
              <svg width="10" height="10" viewBox="0 0 10 10"><path d="M0 8.500h10" stroke="#000" strokeWidth="3" /></svg>
            </WindowButton>
            <WindowButton aria-label="Maximize">
              <svg width="10" height="8" viewBox="0 0 10 8"><path d="M1 1h8v6H1z" fill="none" stroke="#000" strokeWidth="2" /></svg>
            </WindowButton>
            <WindowButton $close aria-label="Close">
              <svg width="8" height="8" viewBox="0 0 8 8"><path d="M.5 0l7 8M7.500 0l-7 8" stroke="#000" strokeWidth="2" /></svg>
            </WindowButton>
          </WindowButtons>
        </TitleBar>

        <Banner>
          <BannerArt viewBox="0 0 1521 80" preserveAspectRatio="none">
            <defs>
              <linearGradient id="sky">
                <stop offset="0" stopColor="#2e0689" />
                <stop offset=".32" stopColor="#2e0689" />
                <stop offset=".35" stopColor="#150a85" />
                <stop offset=".42" stopColor="#26048c" />
                <stop offset=".52" stopColor="#3a078b" />
                <stop offset=".66" stopColor="#590795" />
                <stop offset=".74" stopColor="#6a07a2" />
                <stop offset="1" stopColor="#69069a" />
              </linearGradient>
              <linearGradient id="shard" x1="0" y1="0" x2="1" y2="1">
                <stop offset="0" stopColor="#4b9fc8" />
                <stop offset=".5" stopColor="#2f4fae" />
                <stop offset="1" stopColor="#3f8fce" />
              </linearGradient>
              <linearGradient id="pink" x1="0" y1="0" x2="0" y2="1">
                <stop offset="0" stopColor="#b85bd8" />
                <stop offset=".6" stopColor="#b24fd6" />
                <stop offset="1" stopColor="#cf7af2" />
              </linearGradient>
              <radialGradient id="glow">
                <stop offset="0" stopColor="#2f78c4" />
                <stop offset="1" stopColor="#2f3fa8" stopOpacity="0" />
              </radialGradient>
            </defs>
            <rect width="1521" height="80" fill="url(#sky)" />
            <path d="M262 0h34L170 80h-40z" fill="#3a08e0" opacity=".75" />
            <path d="M120 0h45L60 80H10z" fill="#42229c" opacity=".25" />
            <path d="M207 0l-80 48" stroke="#4a35b4" />
            <ellipse cx="437" cy="56" rx="12" ry="24" fill="url(#glow)" />
            <path d="M465 0h36l75 80h-65z" fill="url(#shard)" />
            <path d="M465 0l48 80M500 3l76 77M500 3l10 72" fill="none" stroke="#62a2e6" />
            <path d="M1118 0h62l-44 80h-35v-8z" fill="url(#pink)" />
            <path d="M1202 0h38l-72 48-20 2z" fill="#9a3cc6" opacity=".65" />
            <path d="M1284 0h16l-50 30-10-4z" fill="#9a3cc6" opacity=".35" />
            <path d="M1325 62l15-13 15 10z" fill="#8a2fba" />
          </BannerArt>
          <Brand>
            <Seal>
              <span>东</span><span>震</span><span>科</span><span>技</span>
            </Seal>
            <BrandName>DZKJ Tools</BrandName>
          </Brand>
          <Slogan>Android + iPhone &amp; PCB Layout - Schematics</Slogan>
        </Banner>

        <Main>
          <SidePanel>
            <SideTabs>
              <SideTab $active><PdfIcon large />Schematic</SideTab>
              <SideTab><PadsIcon />Layout</SideTab>
              <SideTab><ShareIcon />Share</SideTab>
            </SideTabs>
            <SideBody>
              <TreeFrame>
                <Tree>
                  {models.map((name, i) => (
                    <TreeRow key={name}>
                      <Expander aria-label={`Toggle ${name}`}><BoxIcon open={i === models.length - 1} /></Expander>
                      <Branch />
                      <FolderIcon />
                      <TreeLabel>{name}</TreeLabel>
                    </TreeRow>
                  ))}
                  {files.map((name, i) => (
                    <TreeRow key={name} $child>
                      <Branch $long />
                      <PdfIcon />
                      <TreeLabel $child $selected={i === 0}>{name}</TreeLabel>
                    </TreeRow>
                  ))}
                </Tree>
                <Track>
                  <ScrollButton aria-label="Scroll up"><Chevron dir="up" /></ScrollButton>
                  <Gap $grow={252} />
                  <Thumb $grow={78}><Grip /></Thumb>
                  <Gap $grow={310} />
                  <ScrollButton aria-label="Scroll down"><Chevron dir="down" /></ScrollButton>
                </Track>
                <Track $row>
                  <ScrollButton $w={17} aria-label="Scroll left"><Chevron dir="left" /></ScrollButton>
                  <Thumb $grow={190}><Grip row /></Thumb>
                  <Gap $grow={4} />
                  <ScrollButton $w={17} aria-label="Scroll right"><Chevron dir="right" /></ScrollButton>
                </Track>
              </TreeFrame>
              <Splitter>
                <svg width="6" height="8" viewBox="0 0 6 8"><path d="M1 0l4 4-4 4z" fill="#e02020" /></svg>
              </Splitter>
            </SideBody>
          </SidePanel>

          <DocPanel>
            <DocTabs>
              <DocTabBox>
                <Slant side="left" />
                <DocTabFace><button>Welcome</button></DocTabFace>
                <Slant side="right" />
              </DocTabBox>
              <DocTabBox $active>
                <Slant side="left" />
                <DocTabFace $active>
                  <button>XT177x_Schematics</button>
                  <CloseTab aria-label="Close tab">
                    <svg width="7" height="7" viewBox="0 0 7 7"><path d="M.5 .5l6 6M6.500 .5l-6 6" stroke="#fff" strokeWidth="1.600" /></svg>
                  </CloseTab>
                </DocTabFace>
                <Slant side="right" />
              </DocTabBox>
            </DocTabs>
            <Toolbar>
              <ToolButton $w={20} aria-label="Open"><DocIcon /></ToolButton>
              <ToolButton $w={26} aria-label="Rotate right"><RotateIcon /></ToolButton>
              <ToolButton $w={22} aria-label="Rotate left"><RotateIcon flip /></ToolButton>
              <Divider />
              <Field $gap={5}>
                Page:
                <Box $w={40} defaultValue="3" />
              </Field>
              <Total>/ 19</Total>
              <ToolButton aria-label="Previous page"><PageArrow /></ToolButton>
              <ToolButton $w={28} aria-label="Next page"><PageArrow next /></ToolButton>
              <ToolButton $w={18} aria-label="Fit width"><FitIcon /></ToolButton>
              <ToolButton $w={30} aria-label="Fit page"><FitIcon page /></ToolButton>
              <ToolButton $w={18} aria-label="Zoom out"><ZoomIcon /></ToolButton>
              <ToolButton $w={28} aria-label="Zoom in"><ZoomIcon plus /></ToolButton>
              <Divider />
              <Field $gap={3}>
                Find:
                <Box $w={160} />
              </Field>
              <ToolButton $w={26} aria-label="Find previous"><FindArrow /></ToolButton>
              <ToolButton aria-label="Find next"><FindArrow next /></ToolButton>
              <ToolButton aria-label="Match case"><CaseIcon /></ToolButton>
            </Toolbar>
            <Viewer>
              <Stage><Schematic /></Stage>
              <Track>
                <ScrollButton $w={12} aria-label="Page up"><Chevron dir="up" /></ScrollButton>
                <Gap $grow={67} />
                <Thumb $grow={33}><Grip /></Thumb>
                <Gap $grow={538} />
                <ScrollButton $w={12} aria-label="Page down"><Chevron dir="down" /></ScrollButton>
              </Track>
            </Viewer>
          </DocPanel>
        </Main>

        <StatusBar>
          <span>Version:1.0.0.52</span>
          <Current>Current [XT177x_Schematics]</Current>
        </StatusBar>
      </Window>
    </>
  );
}
